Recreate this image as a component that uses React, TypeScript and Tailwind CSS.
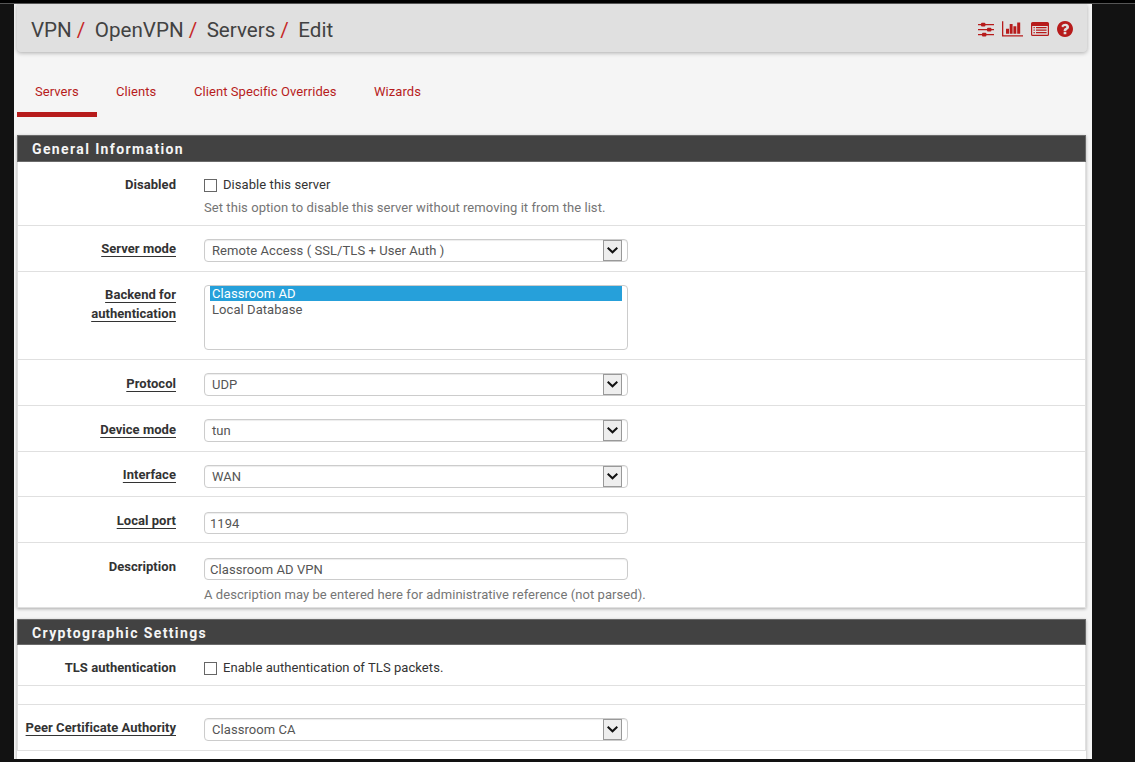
import type { ReactNode } from "react";

function SlidersIcon() {
  return (
    <svg width="16" height="15" viewBox="0 0 16 15" fill="#b71c1c">
      <path d="M0 2h16v1.200H0zM0 7h16v1.200H0zM0 12h16v1.200H0z" />
      <rect x="3" y="0.800" width="4.400" height="3.600" rx="1" />
      <rect x="9" y="5.800" width="4.400" height="3.600" rx="1" />
      <rect x="4" y="10.800" width="4.400" height="3.600" rx="1" />
    </svg>
  );
}

function ChartIcon() {
  return (
    <svg width="21" height="16" viewBox="0 0 21 16" fill="#b71c1c">
      <path d="M0 .3h1.300v13.900H21v1.300H0z" />
      <path d="M4 7.800h3v5H4zM7.700 3h2.900v9.800H7.700zM11.400 5.200h2.900v7.600h-2.900zM15.200 1.500h3v11.300h-3z" />
    </svg>
  );
}

function ListIcon() {
  return (
    <svg width="18" height="14" viewBox="0 0 18 14" fill="#b71c1c">
      <path
        fillRule="evenodd"
        d="M1.600 0h14.800A1.600 1.600 0 0 1 18 1.600v10.800a1.600 1.600 0 0 1-1.600 1.600H1.600A1.600 1.600 0 0 1 0 12.400V1.600A1.600 1.600 0 0 1 1.600 0zM1.200 4v8.400q0 .4.400.4h14.800q.4 0 .4-.4V4z"
      />
      <path d="M2.500 5h1.300v1.200H2.500zM2.500 7.500h1.300v1.200H2.500zM2.500 10h1.300v1.200H2.500zM5 5h10.600v1.200H5zM5 7.500h10.600v1.200H5zM5 10h10.600v1.200H5z" />
    </svg>
  );
}

function HelpIcon() {
  return (
    <svg width="16" height="16" viewBox="128 128 1536 1536" fill="#b71c1c">
      <path d="M1024 1376v-192q0-14-9-23t-23-9h-192q-14 0-23 9t-9 23v192q0 14 9 23t23 9h192q14 0 23-9t9-23zm256-672q0-88-55.500-163t-138.500-116-170-41q-243 0-371 213-15 24 8 42l132 100q7 6 19 6 16 0 25-12 53-68 86-92 34-24 86-24 48 0 85.500 26t37.500 59q0 38-20 61t-68 45q-63 28-115.500 86.500t-52.500 125.500v36q0 14 9 23t23 9h192q14 0 23-9t9-23q0-19 21.500-49.500t54.500-49.500q32-18 49-28.500t46-35 44.500-48 28-60.500 12.500-81zm384 192q0 209-103 385.500t-279.500 279.500-385.500 103-385.500-103-279.500-279.500-103-385.500 103-385.500 279.500-279.500 385.500-103 385.500 103 279.500 279.500 103 385.500z" />
    </svg>
  );
}

function Row({
  label,
  linked = false,
  height,
  labelPad = "pt-[13px]",
  children,
}: {
  label?: ReactNode;
  linked?: boolean;
  height: string;
  labelPad?: string;
  children?: ReactNode;
}) {
  return (
    <div className={`flex border-x border-b border-[#e0e0e0] ${height}`}>
      <div className={`w-[158px] shrink-0 whitespace-nowrap text-right font-bold leading-[19px] tracking-[0.04px] text-[#333] ${labelPad}`}>
        <span className={linked ? "underline decoration-1 underline-offset-[3px]" : ""}>{label}</span>
      </div>
      <div className="ml-[28px] w-[460px] pt-[13px]">{children}</div>
    </div>
  );
}

function Select({ value }: { value: string }) {
  return (
    <div className="flex h-[23px] w-[424px] items-center justify-between rounded-[4px] border border-[#ccc] pl-[7px] pr-[5px] text-[#555] shadow-[inset_0_1px_1px_rgba(0,0,0,0.075)]">
      <span>{value}</span>
      <span className="flex h-[21px] w-[19px] items-center justify-center border border-[#999] bg-[#eee]">
        <svg width="11" height="7" viewBox="0 0 11 7" fill="none" stroke="#111" strokeWidth="2">
          <path d="M.7.8 5.500 5.300 10.300.8" />
        </svg>
      </span>
    </div>
  );
}

function Input({ value }: { value: string }) {
  return (
    <div className="flex h-[22px] w-[424px] items-center rounded-[4px] border border-[#ccc] pl-[5px] pt-px text-[#555] shadow-[inset_0_1px_1px_rgba(0,0,0,0.075)]">
      {value}
    </div>
  );
}

function Check({ text }: { text: string }) {
  return (
    <div className="flex h-[19px] items-center text-[#333]">
      <span className="mr-[6px] mt-px h-[13px] w-[13px] border border-[#666] bg-white" />
      {text}
    </div>
  );
}

function PanelTitle({ height, children }: { height: string; children: ReactNode }) {
  return (
    <h2 className={`border border-[#6a6a6a] bg-[#424242] pl-[14px] text-[14px] font-bold leading-[26px] tracking-[1.38px] text-[#f5f5f5] ${height}`}>
      {children}
    </h2>
  );
}

export default function App() {
  return (
    <div className="flex h-[762px] w-[1135px] flex-col overflow-hidden bg-[#121212] font-['Roboto',sans-serif] text-[13px] tracking-[0.065px]">
      <div className="h-[3px] shrink-0 bg-black" />
      <div className="h-px shrink-0 bg-[#555]" />
      <div className="ml-[14px] h-[755px] w-[1078px] overflow-hidden bg-[#f5f5f5] pl-[3px] pr-[6px]">
        <header className="flex h-[48px] w-[1070px] items-center justify-between rounded-b-[4px] bg-[#e0e0e0] pl-[14px] pr-[14px] shadow-[0_1px_4px_rgba(0,0,0,0.3)]">
          <h1 className="flex pt-[4px] text-[20.600px] tracking-normal text-[#424242]">
            <span>VPN</span>
            <span className="w-[23px] pl-[5px] text-[#c62828]">/</span>
            <span>OpenVPN</span>
            <span className="w-[23px] pl-[5px] text-[#c62828]">/</span>
            <span>Servers</span>
            <span className="w-[23px] pl-[5px] text-[#c62828]">/</span>
            <span>Edit</span>
          </h1>
          <div className="flex items-center gap-[8px] pt-[2px]">
            <SlidersIcon />
            <ChartIcon />
            <ListIcon />
            <HelpIcon />
          </div>
        </header>
        <nav className="flex h-[65px] whitespace-nowrap leading-[20px] text-[#b71c1c]">
          <div className="w-[80px] border-b-[5px] border-[#b71c1c] pl-[18px] pt-[30px]">Servers</div>
          <div className="w-[78px] pl-[19px] pt-[30px]">Clients</div>
          <div className="w-[180px] pl-[19px] pt-[30px]">Client Specific Overrides</div>
          <div className="pl-[19px] pt-[30px]">Wizards</div>
        </nav>
        <section className="mt-[18px] h-[473px] bg-white shadow-[0_1px_3px_rgba(0,0,0,0.3)]">
          <PanelTitle height="h-[27px]">General Information</PanelTitle>
          <Row label="Disabled" height="h-[64px]">
            <Check text="Disable this server" />
            <div className="mt-[4px] whitespace-nowrap leading-[19px] text-[#757575]">
              Set this option to disable this server without removing it from the list.
            </div>
          </Row>
          <Row label="Server mode" linked height="h-[46px]">
            <Select value="Remote Access ( SSL/TLS + User Auth )" />
          </Row>
          <Row
            label={
              <>
                Backend for
                <br />
                authentication
              </>
            }
            linked
            height="h-[88px]"
          >
            <div className="h-[65px] w-[424px] rounded-[4px] border border-[#ccc] pl-[5px] pr-[5px] leading-[15px] text-[#555]">
              <div className="bg-[#26a0da] pl-[2px] pt-px leading-[14px] text-white">Classroom AD</div>
              <div className="pl-[2px] pt-px">Local Database</div>
            </div>
          </Row>
          <Row label="Protocol" linked height="h-[46px]" labelPad="pt-[14px]">
            <Select value="UDP" />
          </Row>
          <Row label="Device mode" linked height="h-[46px]" labelPad="pt-[14px]">
            <Select value="tun" />
          </Row>
          <Row label="Interface" linked height="h-[45px]">
            <Select value="WAN" />
          </Row>
          <Row label="Local port" linked height="h-[46px]" labelPad="pt-[14px]">
            <div className="pt-[2px]">
              <Input value="1194" />
            </div>
          </Row>
          <Row label="Description" height="h-[65px]" labelPad="pt-[14px]">
            <div className="pt-[2px]">
              <Input value="Classroom AD VPN" />
            </div>
            <div className="mt-[5px] whitespace-nowrap leading-[19px] text-[#757575]">
              A description may be entered here for administrative reference (not parsed).
            </div>
          </Row>
        </section>
        <section className="mt-[11px] h-[200px] bg-white shadow-[0_1px_3px_rgba(0,0,0,0.3)]">
          <PanelTitle height="h-[26px]">Cryptographic Settings</PanelTitle>
          <Row label="TLS authentication" height="h-[41px]">
            <Check text="Enable authentication of TLS packets." />
          </Row>
          <Row height="h-[19px]" />
          <Row label="Peer Certificate Authority" linked height="h-[46px]">
            <Select value="Classroom CA" />
          </Row>
        </section>
      </div>
    </div>
  );
}
